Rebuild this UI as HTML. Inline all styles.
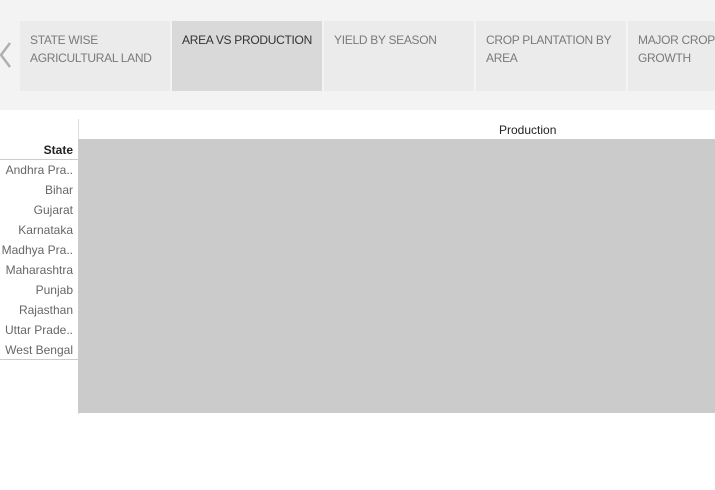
<!DOCTYPE html>
<html><head><style>
body{margin:0;width:715px;height:490px;overflow:hidden;background:#fff;font-family:"Liberation Sans",sans-serif;position:relative}
.top{position:absolute;left:0;top:0;width:715px;height:110px;background:#f3f3f3}
.tab{position:absolute;top:21px;width:150px;height:70px;background:#ebebeb;color:#7a7a7a;font-size:12px;line-height:18px;box-sizing:border-box;padding:10px 10px 0 10px;letter-spacing:-0.3px;white-space:nowrap;overflow:hidden}
.tab.a{background:#d9d9d9;color:#333}
.lbl{position:absolute;right:642px;font-size:12px;color:#666;line-height:20px;white-space:nowrap}
</style></head><body>
<div class="top">
<svg style="position:absolute;left:0;top:40px" width="12" height="30"><polyline points="10,3 1,15 10,27" fill="none" stroke="#b0b0b0" stroke-width="2.5"/></svg>
<div class="tab" style="left:20px">STATE WISE<br>AGRICULTURAL LAND</div>
<div class="tab a" style="left:172px">AREA VS PRODUCTION</div>
<div class="tab" style="left:324px">YIELD BY SEASON</div>
<div class="tab" style="left:476px">CROP PLANTATION BY<br>AREA</div>
<div class="tab" style="left:628px;width:87px">MAJOR CROP<br>GROWTH</div>
</div>
<div style="position:absolute;left:78px;top:119px;width:1px;height:295px;background:#ddd"></div>
<div style="position:absolute;left:78px;top:139px;width:637px;height:274px;background:#cbcbcb"></div>
<div style="position:absolute;left:499px;top:122px;font-size:12px;color:#222;line-height:16px">Production</div>
<div class="lbl" style="top:140px;color:#222;font-weight:bold">State</div>
<div style="position:absolute;left:0;top:159px;width:78px;height:1px;background:#ccc"></div>
<div class="lbl" style="top:160px">Andhra Pra..</div>
<div class="lbl" style="top:180px">Bihar</div>
<div class="lbl" style="top:200px">Gujarat</div>
<div class="lbl" style="top:220px">Karnataka</div>
<div class="lbl" style="top:240px">Madhya Pra..</div>
<div class="lbl" style="top:260px">Maharashtra</div>
<div class="lbl" style="top:280px">Punjab</div>
<div class="lbl" style="top:300px">Rajasthan</div>
<div class="lbl" style="top:320px">Uttar Prade..</div>
<div class="lbl" style="top:340px">West Bengal</div>
<div style="position:absolute;left:0;top:359px;width:78px;height:1px;background:#ccc"></div>
</body></html>
